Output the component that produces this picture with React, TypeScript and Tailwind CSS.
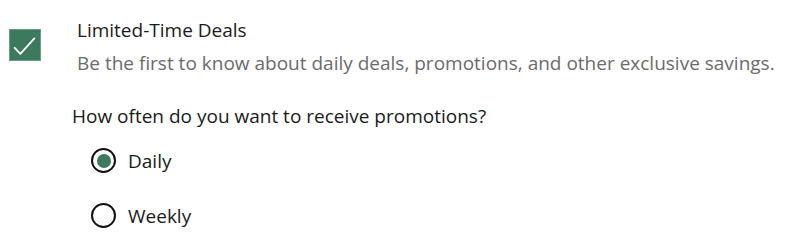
import React, { useState } from 'react';

const App: React.FC = () => {
  const [checked, setChecked] = useState(true);
  const [freq, setFreq] = useState<'daily' | 'weekly'>('daily');

  const options: { id: 'daily' | 'weekly'; label: string }[] = [
    { id: 'daily', label: 'Daily' },
    { id: 'weekly', label: 'Weekly' },
  ];

  return (
    <div className="w-[800px] h-[246px] bg-white text-[19px] font-['Open_Sans','Liberation_Sans',sans-serif] text-[#1a1a1a] overflow-hidden">
      {/* Opt-in row */}
      <div className="flex pt-[18px]">
        <button
          type="button"
          onClick={() => setChecked(!checked)}
          className="ml-[9px] mt-[11px] w-[32px] h-[32px] shrink-0 border border-[#6f9c86] bg-[#3b7a5d] flex items-center justify-center"
        >
          {checked && (
            <svg width="32" height="32" viewBox="0 0 32 32" fill="none">
              <path d="M5 19 L11 25.5 L26 9" stroke="white" strokeWidth="2" strokeLinecap="round" strokeLinejoin="round" />
            </svg>
          )}
        </button>
        <div className="ml-[36px] flex flex-col gap-[9px]">
          <span className="leading-[24px]">Limited-Time Deals</span>
          <span className="leading-[24px] text-[#6b6b6b]">
            Be the first to know about daily deals, promotions, and other exclusive savings.
          </span>
        </div>
      </div>

      {/* Frequency */}
      <div className="pl-[72px] mt-[29px]">
        <p className="leading-[24px]">How often do you want to receive promotions?</p>
        <div className="mt-[20px] flex flex-col gap-[30px] pl-[19px]">
          {options.map((o) => (
            <label key={o.id} className="flex items-center h-[25px] cursor-pointer" onClick={() => setFreq(o.id)}>
              <span className="w-[25px] h-[25px] rounded-full border-2 border-[#111] flex items-center justify-center">
                {freq === o.id && <span className="w-[14px] h-[14px] rounded-full bg-[#3b7a5d]" />}
              </span>
              <span className="ml-[12px] leading-[24px]">{o.label}</span>
            </label>
          ))}
        </div>
      </div>
    </div>
  );
};

export default App;
